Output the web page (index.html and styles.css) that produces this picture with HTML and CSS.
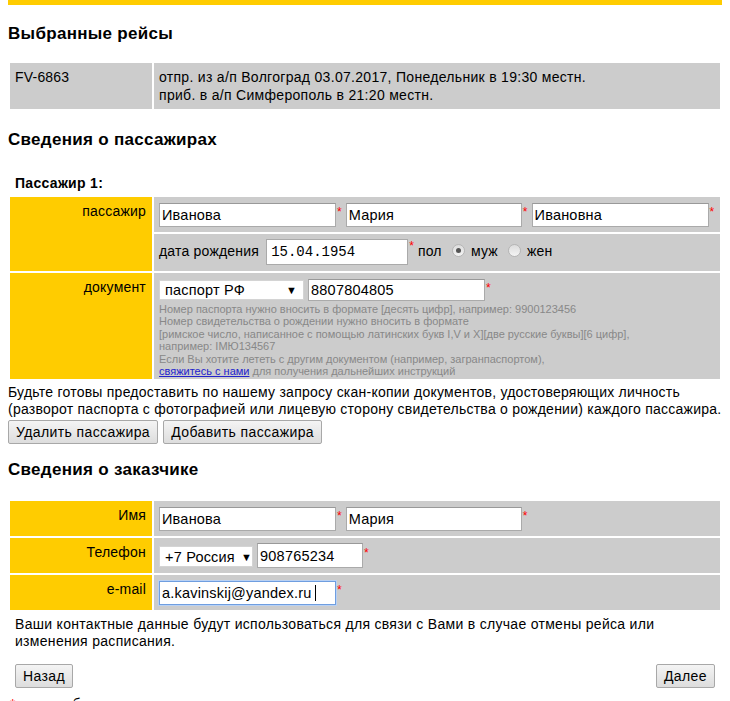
FILE: index.html
```html
<!DOCTYPE html>
<html lang="ru">
<head>
<meta charset="utf-8">
<title>Бронирование</title>
<link rel="stylesheet" href="styles.css">
</head>
<body>
<div class="topbar"></div>

<h2>Выбранные рейсы</h2>
<table class="flights">
  <tr>
    <td class="fl-code">FV-6863</td>
    <td class="fl-info">отпр. из а/п Волгоград 03.07.2017, Понедельник в 19:30 местн.<br>приб. в а/п Симферополь в 21:20 местн.</td>
  </tr>
</table>

<h2>Сведения о пассажирах</h2>
<h3 class="pax-title">Пассажир 1:</h3>
<table class="form">
  <tr>
    <td class="lbl" rowspan="2">пассажир</td>
    <td class="fld row-a"><input class="txt w177" value="Иванова"><span class="req">*</span> <input class="txt w176" value="Мария"><span class="req">*</span> <input class="txt w177" value="Ивановна"><span class="req">*</span></td>
  </tr>
  <tr>
    <td class="fld row-b">дата рождения <input class="date" value="15.04.1954"><span class="req">*</span> пол <span class="radio checked"></span> муж <span class="radio"></span> жен</td>
  </tr>
  <tr>
    <td class="lbl">документ</td>
    <td class="fld row-c">
      <div class="doc-line"><span class="sel sel-doc">паспорт РФ<span class="arr">▼</span></span> <input class="txt w177 h22" value="8807804805"><span class="req">*</span></div>
      <div class="hint">Номер паспорта нужно вносить в формате [десять цифр], например: 9900123456<br>Номер свидетельства о рождении нужно вносить в формате<br>[римское число, написанное с помощью латинских букв I,V и X][две русские буквы][6 цифр],<br>например: IМЮ134567<br>Если Вы хотите лететь с другим документом (например, загранпаспортом),<br><a href="#">свяжитесь с нами</a> для получения дальнейших инструкций</div>
    </td>
  </tr>
</table>
<p class="note">Будьте готовы предоставить по нашему запросу скан-копии документов, удостоверяющих личность (разворот паспорта с фотографией или лицевую сторону свидетельства о рождении) каждого пассажира.</p>
<div class="pax-btns"><button class="btn">Удалить пассажира</button> <button class="btn">Добавить пассажира</button></div>

<h2 class="cust-title">Сведения о заказчике</h2>
<table class="form">
  <tr>
    <td class="lbl">Имя</td>
    <td class="fld row-a"><input class="txt w177" value="Иванова"><span class="req">*</span> <input class="txt w176" value="Мария"><span class="req">*</span></td>
  </tr>
  <tr>
    <td class="lbl">Телефон</td>
    <td class="fld row-a"><span class="sel sel-phone">+7 Россия<span class="arr">▼</span></span> <input class="txt w106 h25" value="908765234"><span class="req">*</span></td>
  </tr>
  <tr>
    <td class="lbl">e-mail</td>
    <td class="fld row-a"><span class="txt w177 focused">a.kavinskij@yandex.ru<span class="caret"></span></span><span class="req">*</span></td>
  </tr>
</table>

<div class="contact">
  <p class="contact-text">Ваши контактные данные будут использоваться для связи с Вами в случае отмены рейса или изменения расписания.</p>
  <div class="nav-btns"><button class="btn">Назад</button><button class="btn">Далее</button></div>
</div>
<p class="required-note"><span class="req-inline">*</span> - поля обязательные для заполнения</p>
</body>
</html>
```

FILE: styles.css
```css
html, body {
  background: #ffffff;
}

body {
  margin: 0 8px;
  font-family: "Liberation Sans", Arial, sans-serif;
  font-size: 14px;
  line-height: 16px;
  letter-spacing: 0.2px;
  color: #000000;
}

.topbar {
  height: 5px;
  background: #ffcc00;
}

h2 {
  font-size: 17px;
  line-height: 18px;
  font-weight: bold;
  letter-spacing: 0.3px;
  margin: 20px 0 18px;
}

table {
  border-collapse: separate;
  border-spacing: 2px;
  width: 100%;
}

td {
  padding: 0;
}

.flights td {
  background: #cccccc;
  padding: 5px;
  line-height: 18px;
  vertical-align: top;
}

.fl-info {
  letter-spacing: 0.3px;
}

.fl-code {
  width: 132px;
}

.pax-title {
  font-size: 14px;
  line-height: 16px;
  font-weight: bold;
  margin: 26px 0 4px;
  padding-left: 7px;
  letter-spacing: 0.3px;
}

.form td {
  background: #cccccc;
  vertical-align: top;
}

.form td.lbl {
  background: #ffcc00;
  width: 131px;
  text-align: right;
  padding: 6px 6px 5px 5px;
}

.fld {
  padding: 6px 5px 5px;
  white-space: nowrap;
}

.row-a {
  height: 24px;
}

.row-b {
  padding: 5px 5px 6px;
  height: 26px;
  vertical-align: middle;
}

.row-c {
  padding-top: 6px;
  padding-bottom: 2px;
  white-space: normal;
}

.txt {
  display: inline-block;
  box-sizing: border-box;
  height: 24px;
  border: 1px solid #aaaaaa;
  border-top-color: #999999;
  background: #ffffff;
  padding: 0 2px;
  margin: 0;
  font-family: "Liberation Sans", Arial, sans-serif;
  font-size: 14.5px;
  letter-spacing: 0.2px;
  color: #000000;
  vertical-align: top;
  line-height: 22px;
}

.w177 { width: 177px; }
.w176 { width: 176px; }
.w106 { width: 106px; }
.h22 { height: 22px; line-height: 20px; }
.h25 { height: 25px; margin-top: -1px; }

.focused {
  border: 1px solid #6f9ee0;
  box-shadow: 0 0 0 1px #b9d1f3;
  padding-left: 2px;
}

.caret {
  display: inline-block;
  width: 1px;
  height: 16px;
  background: #000000;
  margin-left: 4px;
  vertical-align: -3px;
}

.req {
  display: inline-block;
  vertical-align: top;
  color: #ff0000;
  font-size: 12px;
  line-height: 12px;
  padding-top: 3px;
  margin-left: 1px;
  letter-spacing: 0;
}

.date {
  box-sizing: border-box;
  width: 142px;
  height: 26px;
  border: 1px solid #aaaaaa;
  background: #ffffff;
  padding: 0 4px;
  margin: 0 0 0 3px;
  font-family: "Liberation Mono", "DejaVu Sans Mono", monospace;
  font-size: 14px;
  letter-spacing: 0;
  color: #000000;
  vertical-align: middle;
}

.row-b .req {
  vertical-align: middle;
  padding-top: 0;
  position: relative;
  top: -6px;
}

.radio {
  display: inline-block;
  box-sizing: border-box;
  width: 13px;
  height: 13px;
  border-radius: 50%;
  border: 1px solid #b5b5b5;
  background: linear-gradient(#dcdcdc, #f4f4f4);
  vertical-align: -1px;
  margin: 0 2px 0 6px;
  position: relative;
}

.radio.checked::after {
  content: "";
  position: absolute;
  left: 3px;
  top: 3px;
  width: 5px;
  height: 5px;
  border-radius: 50%;
  background: #555555;
}

.doc-line {
  height: 24px;
  white-space: nowrap;
}

.sel {
  display: inline-flex;
  align-items: center;
  justify-content: space-between;
  box-sizing: border-box;
  height: 20px;
  background: #ffffff;
  border: 1px solid #d4d4d4;
  padding: 0 6px 0 5px;
  vertical-align: top;
  margin-top: 1px;
  font-size: 14.5px;
}

.sel-doc {
  width: 145px;
}

.sel-phone {
  width: 94px;
  margin-top: 2px;
  height: 21px;
}

.arr {
  font-size: 11px;
  letter-spacing: 0;
  margin-left: 6px;
}

.hint {
  font-size: 11px;
  line-height: 12.4px;
  letter-spacing: 0;
  color: #888888;
  margin-top: 0;
}

.hint a {
  color: #2222cc;
  text-decoration: underline;
}

.note {
  margin: 3px -8px 0 0;
  line-height: 17px;
  letter-spacing: 0.24px;
}

.pax-btns {
  margin-top: 2px;
  height: 24px;
}

.btn {
  box-sizing: border-box;
  height: 24px;
  padding: 0 7px;
  margin: 0;
  border: 1px solid #a8a8a8;
  border-radius: 2px;
  background: linear-gradient(#f4f4f4, #dddddd);
  font-family: "Liberation Sans", Arial, sans-serif;
  font-size: 14px;
  letter-spacing: 0.4px;
  color: #000000;
  vertical-align: top;
}

.pax-btns .btn + .btn {
  margin-left: 1px;
}

.cust-title {
  margin-top: 17px;
  margin-bottom: 20px;
}

.contact {
  padding: 4px 7px 0;
}

.contact-text {
  margin: 0;
  line-height: 17px;
  letter-spacing: 0.3px;
}

.nav-btns {
  display: flex;
  justify-content: space-between;
  margin-top: 14px;
}

.required-note {
  margin: 8px 0 0;
  padding-left: 2px;
}

.req-inline {
  color: #ff0000;
}
```
